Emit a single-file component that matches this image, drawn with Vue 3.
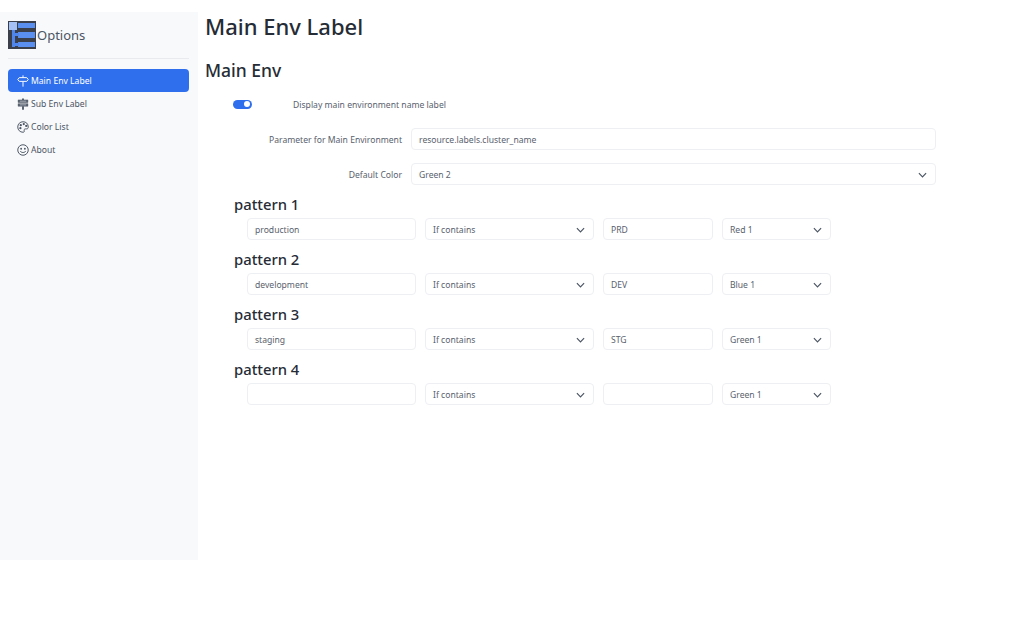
<script setup>
const nav = [
  { label: 'Main Env Label', icon: 'main', active: true },
  { label: 'Sub Env Label', icon: 'sub' },
  { label: 'Color List', icon: 'palette' },
  { label: 'About', icon: 'smile' },
]
const patterns = [
  { name: 'pattern 1', value: 'production', label: 'PRD', color: 'Red 1' },
  { name: 'pattern 2', value: 'development', label: 'DEV', color: 'Blue 1' },
  { name: 'pattern 3', value: 'staging', label: 'STG', color: 'Green 1' },
  { name: 'pattern 4', value: '', label: '', color: 'Green 1' },
]
</script>

<template>
  <div class="page">
    <aside class="sidebar">
      <div class="brand">
        <svg class="logo" viewBox="0 0 28 28" width="28" height="28">
          <rect width="28" height="28" fill="#3b3f4a" />
          <rect x="1" y="1" width="8" height="8" fill="#a5c0f5" />
          <rect x="10" y="2" width="17" height="5" fill="#5a8eef" />
          <rect x="10" y="11" width="17" height="6" fill="#5a8eef" />
          <rect x="10" y="21" width="17" height="5" fill="#5a8eef" />
          <rect x="4" y="9" width="3" height="17" fill="#4f86ee" />
          <rect x="7" y="12" width="4" height="3" fill="#4f86ee" />
          <rect x="7" y="22" width="4" height="3" fill="#4f86ee" />
        </svg>
        <span>Options</span>
      </div>
      <hr class="divider" />
      <nav class="nav">
        <a v-for="item in nav" :key="item.label" class="nav-item" :class="{ active: item.active }">
          <svg class="nav-icon" viewBox="0 0 16 16" width="12" height="12" fill="none" stroke="currentColor" stroke-width="1.3">
            <template v-if="item.icon === 'main'">
              <path d="M8 0.5v3M8 9v6.500" />
              <path d="M1 6l2-2.500h10l2 2.500-2 2.500H3z" stroke-linejoin="round" />
            </template>
            <template v-else-if="item.icon === 'sub'">
              <path d="M8 0.500v3M8 11v4.500" stroke-width="2.400" />
              <path d="M1.500 2.500h13v3.500h-13zM1.500 7.500h13v3.500h-13z" fill="currentColor" stroke-width="0.600" />
              <path d="M3.500 4.200h9M3.500 9.200h9" stroke="#f8f9fb" stroke-width="0.800" />
            </template>
            <template v-else-if="item.icon === 'palette'">
              <path d="M8 1C4 1 1 4 1 8s3 7 7 7c1.500 0 2-1 1.600-2-.5-1.300.3-2.500 1.600-2.500H13c1.300 0 2-1 2-2.500C15 3.500 12 1 8 1z" />
              <circle cx="5" cy="5.500" r="1.500" fill="currentColor" stroke="none" />
              <circle cx="9" cy="4" r="1.500" fill="currentColor" stroke="none" />
              <circle cx="12.300" cy="6.500" r="1.500" fill="currentColor" stroke="none" />
              <circle cx="4.500" cy="9.500" r="1.500" fill="currentColor" stroke="none" />
            </template>
            <template v-else>
              <circle cx="8" cy="8" r="7" />
              <circle cx="5.500" cy="6.300" r="1.200" fill="currentColor" stroke="none" />
              <circle cx="10.500" cy="6.300" r="1.200" fill="currentColor" stroke="none" />
              <path d="M4.500 9.800c1 2.200 6 2.200 7 0" stroke-linecap="round" />
            </template>
          </svg>
          <span>{{ item.label }}</span>
        </a>
      </nav>
    </aside>

    <main class="main">
      <h1>Main Env Label</h1>
      <h2>Main Env</h2>
      <div class="settings">
        <div class="toggle-row">
          <span class="toggle"><span class="knob"></span></span>
          <span class="toggle-label">Display main environment name label</span>
        </div>
        <div class="field-row">
          <label>Parameter for Main Environment</label>
          <div class="control">resource.labels.cluster_name</div>
        </div>
        <div class="field-row">
          <label>Default Color</label>
          <div class="control select">
            <span>Green 2</span>
            <svg class="chevron" viewBox="0 0 10 6" width="9" height="6"><path d="M1 1l4 4 4-4" fill="none" stroke="#4b5563" stroke-width="1.300" /></svg>
          </div>
        </div>
      </div>

      <section v-for="p in patterns" :key="p.name" class="pattern">
        <h3>{{ p.name }}</h3>
        <div class="pattern-row">
          <div class="control">{{ p.value }}</div>
          <div class="control select">
            <span>If contains</span>
            <svg class="chevron" viewBox="0 0 10 6" width="9" height="6"><path d="M1 1l4 4 4-4" fill="none" stroke="#4b5563" stroke-width="1.300" /></svg>
          </div>
          <div class="control">{{ p.label }}</div>
          <div class="control select">
            <span>{{ p.color }}</span>
            <svg class="chevron" viewBox="0 0 10 6" width="9" height="6"><path d="M1 1l4 4 4-4" fill="none" stroke="#4b5563" stroke-width="1.300" /></svg>
          </div>
        </div>
      </section>
    </main>
  </div>
</template>

<style scoped>
.page {
  display: flex;
  width: 1024px;
  height: 640px;
  box-sizing: border-box;
  padding-top: 12px;
  background: #fff;
  color: #59616d;
  font-family: "Noto Sans", "Open Sans", sans-serif;
  font-size: 8.600px;
  overflow: hidden;
}
.sidebar {
  width: 198px;
  height: 548px;
  flex: none;
  box-sizing: border-box;
  padding: 8px 9px 0 8px;
  background: #f8f9fb;
}
.brand {
  display: flex;
  align-items: center;
  gap: 1px;
  height: 30px;
  font-size: 13px;
  color: #4b5563;
}
.divider {
  margin: 8px 0 10px;
  border: 0;
  border-top: 1px solid #e8eaee;
}
.nav {
  display: flex;
  flex-direction: column;
}
.nav-item {
  display: flex;
  align-items: center;
  gap: 2px;
  height: 23px;
  padding-left: 9px;
  border-radius: 4px;
  color: #4b5563;
}
.nav-item.active {
  background: #2f6fed;
  color: #fff;
}
.main {
  flex: 1;
  padding-left: 7px;
}
h1 {
  margin: 0;
  font-size: 22px;
  line-height: 28px;
  font-weight: 500;
  color: #262c36;
}
h2 {
  margin: 17px 0 0;
  font-size: 17.500px;
  line-height: 26px;
  font-weight: 500;
  color: #262c36;
}
.settings {
  display: flex;
  flex-direction: column;
  margin-top: 16px;
}
.toggle-row {
  display: flex;
  align-items: center;
  height: 10px;
  padding-left: 28px;
}
.toggle {
  display: flex;
  align-items: center;
  justify-content: flex-end;
  width: 19px;
  height: 9px;
  box-sizing: border-box;
  padding-right: 2px;
  border-radius: 5px;
  background: #2f6fed;
}
.knob {
  width: 6px;
  height: 6px;
  border-radius: 50%;
  background: #fff;
}
.toggle-label {
  margin-left: 41px;
  padding-top: 1px;
}
.field-row {
  display: flex;
  align-items: center;
  gap: 9px;
  margin-top: 13px;
  width: 731px;
}
.toggle-row + .field-row {
  margin-top: 19px;
}
.field-row label {
  width: 197px;
  padding-top: 1px;
  text-align: right;
}
.field-row .control {
  flex: 1;
}
.control {
  display: flex;
  align-items: center;
  justify-content: space-between;
  height: 22px;
  box-sizing: border-box;
  padding: 1px 7px 0;
  border: 1px solid #eeeff3;
  border-radius: 4px;
  background: #fff;
}
.chevron {
  margin-right: 1px;
}
.pattern {
  padding-left: 29px;
}
.pattern h3 {
  margin: 0 0 2px;
  padding-top: 7px;
  font-size: 14.800px;
  line-height: 24px;
  font-weight: 500;
  color: #262c36;
}
.pattern-row {
  display: grid;
  grid-template-columns: 169px 169px 110px 109px;
  gap: 9px;
  padding-left: 13px;
}
</style>
